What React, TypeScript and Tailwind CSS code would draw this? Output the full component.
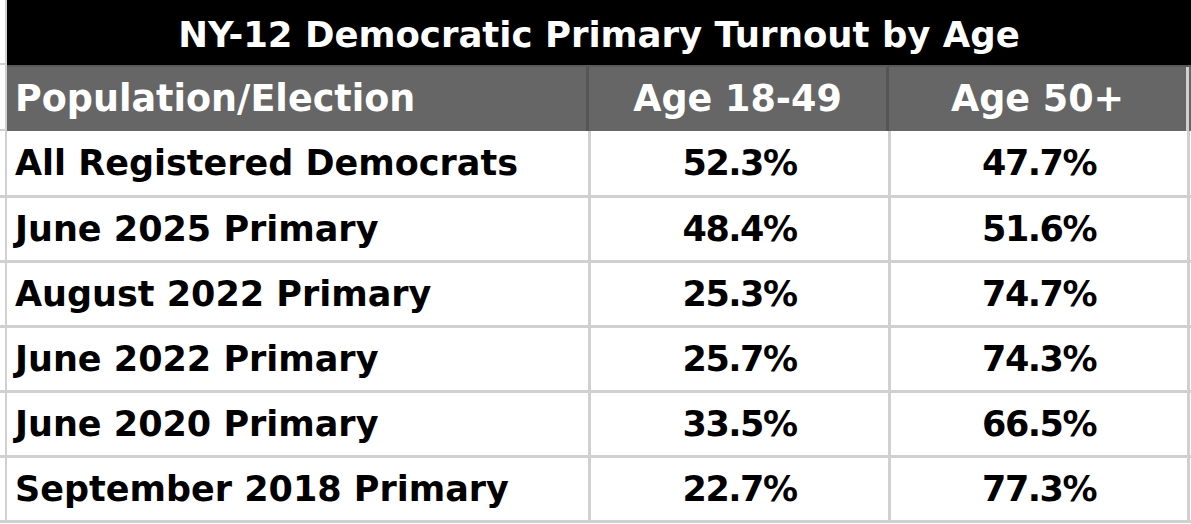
const rows = [
  { label: "All Registered Democrats", young: "52.3%", old: "47.7%" },
  { label: "June 2025 Primary", young: "48.4%", old: "51.6%" },
  { label: "August 2022 Primary", young: "25.3%", old: "74.7%" },
  { label: "June 2022 Primary", young: "25.7%", old: "74.3%" },
  { label: "June 2020 Primary", young: "33.5%", old: "66.5%" },
  { label: "September 2018 Primary", young: "22.7%", old: "77.3%" },
];

const font = { fontFamily: '"DejaVu Sans", "Liberation Sans", sans-serif' };

function Strip({ className = "" }: { className?: string }) {
  return <div className={`w-[7px] shrink-0 border-r-2 border-[#d0d0d0] bg-white ${className}`} />;
}

export default function App() {
  return (
    <div className="h-[524px] w-[1191px] overflow-hidden bg-white font-bold" style={font}>
      <div className="flex h-[65px]">
        <Strip className="border-b-2" />
        <div className="flex flex-1 items-center justify-center bg-black pt-[4px] text-[35.5px] text-white">
          NY-12 Democratic Primary Turnout by Age
        </div>
      </div>

      <div className="flex h-[66px]">
        <Strip className="border-b-2" />
        <div className="flex flex-1 border-t-2 border-[#5a5a5a] bg-[#666666] text-[36.5px] text-white">
          <div className="flex w-[582px] items-center border-r-[3px] border-[#555555] pl-[8px]">Population/Election</div>
          <div className="flex w-[300px] items-center justify-center border-r-[3px] border-[#555555]">Age 18-49</div>
          <div className="flex w-[297px] items-center justify-center">Age 50+</div>
          <div className="w-[3px] bg-[#d0d0d0]" />
        </div>
      </div>

      {rows.map((row, i) => (
        <div
          key={row.label}
          className={`flex border-b-[3px] border-[#d0d0d0] text-[35px] text-black ${i === 0 ? "h-[67px]" : "h-[65px]"}`}
        >
          <Strip />
          <div className="flex w-[584px] items-center border-r-[3px] border-[#d0d0d0] pl-[8px]">{row.label}</div>
          <div className="flex w-[300px] items-center justify-center border-r-[3px] border-[#d0d0d0] tracking-[-1.5px]">
            {row.young}
          </div>
          <div className="flex w-[299px] items-center justify-center border-r-[3px] border-[#d0d0d0] tracking-[-1.5px]">
            {row.old}
          </div>
          <div className="w-[1px]" />
        </div>
      ))}
    </div>
  );
}
